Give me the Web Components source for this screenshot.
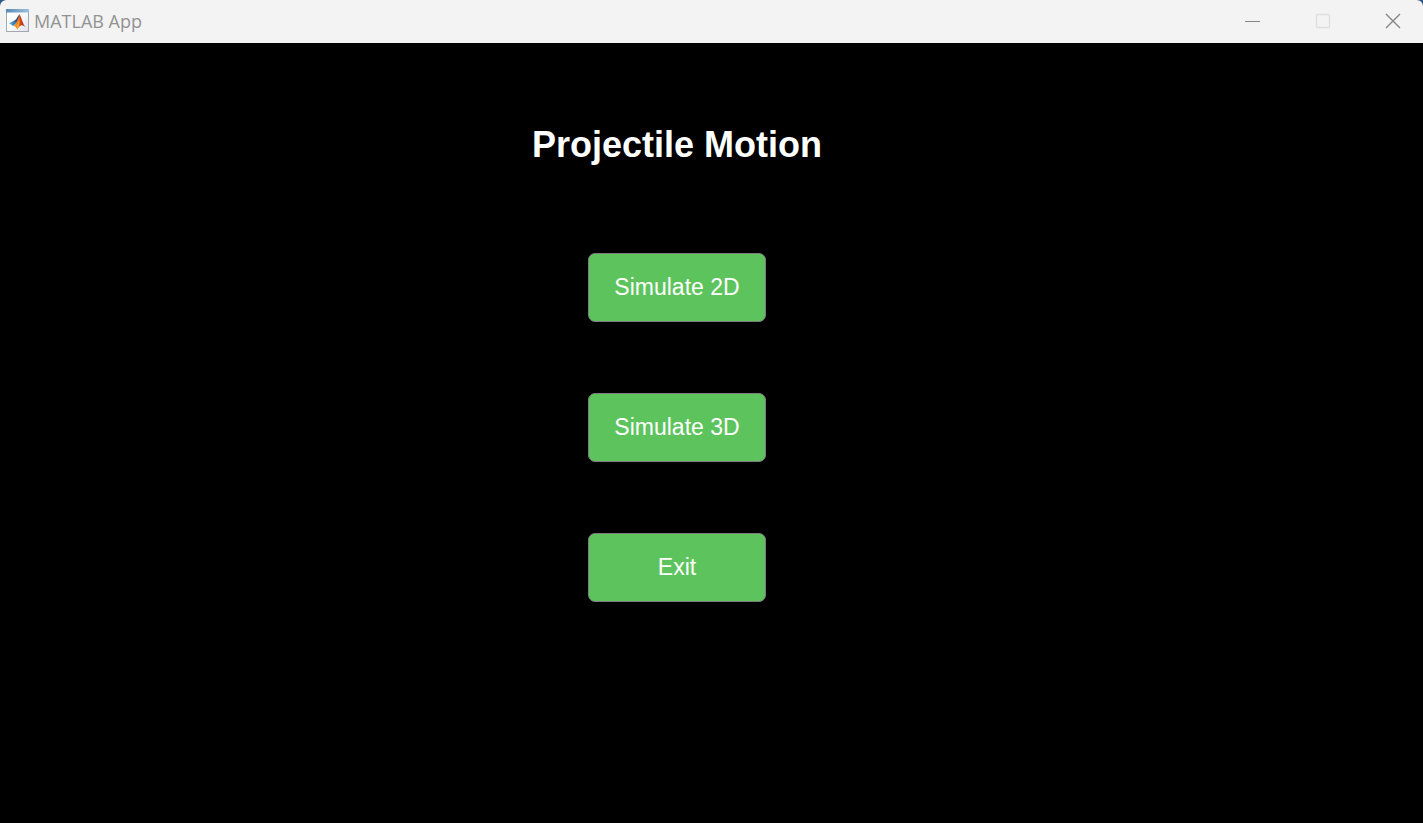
<!DOCTYPE html>
<html lang="en">
<head>
<meta charset="utf-8">
<title>MATLAB App</title>
<style>
  html, body { margin: 0; height: 100%; background: #26588c; }
</style>
</head>
<body>
<app-window>
  <title-bar slot="bar">MATLAB App</title-bar>
  <launch-panel>
    <span slot="heading">Projectile Motion</span>
    <push-button>Simulate 2D</push-button>
    <push-button>Simulate 3D</push-button>
    <push-button>Exit</push-button>
  </launch-panel>
</app-window>
<script>
function define(name, html) {
  const template = document.createElement('template');
  template.innerHTML = html;
  customElements.define(name, class extends HTMLElement {
    constructor() {
      super();
      this.attachShadow({ mode: 'open' }).append(template.content.cloneNode(true));
    }
  });
}

define('app-window', `
  <style>
    :host { display: flex; flex-direction: column; min-height: 100vh; background: #000;
      border-radius: 6px 6px 0 0; overflow: hidden; font-family: "Liberation Sans", Arial, sans-serif; }
    main { flex: 1; }
  </style>
  <slot name="bar"></slot>
  <main><slot></slot></main>`);

define('title-bar', `
  <style>
    :host { display: flex; align-items: center; height: 43px; box-sizing: border-box; padding: 0 0 2px 6px;
      background: #f3f3f3; color: #929292; font: 18px/24px "Open Sans", "Noto Sans", sans-serif; }
    .logo { width: 24px; height: 24px; margin-right: 4px; flex: none; }
    .name { flex: 1; }
    .controls { display: flex; }
    button { width: 70px; height: 40px; box-sizing: border-box; padding: 0; border: 0; background: none; color: #858585;
      display: grid; place-items: center; }
    button:disabled { color: #dedede; }
    button:last-child { width: 65px; padding-left: 5px; }
    button svg { width: 16px; height: 16px; display: block; }
  </style>
  <svg class="logo" viewBox="0 0 24 24" aria-hidden="true">
    <defs>
      <linearGradient id="head" x1="0" y1="0" x2="1" y2="0"><stop stop-color="#5789b3"/><stop offset="1" stop-color="#9ec1dc"/></linearGradient>
      <linearGradient id="sheet" x1="0" y1="0" x2="1" y2="1"><stop offset=".4" stop-color="#fff"/><stop offset="1" stop-color="#dce2e9"/></linearGradient>
      <linearGradient id="flame" x1="0" y1="0" x2="1" y2="0"><stop stop-color="#f5a126"/><stop offset=".35" stop-color="#f07a1c"/><stop offset=".6" stop-color="#d1431a"/><stop offset="1" stop-color="#8c2b16"/></linearGradient>
      <linearGradient id="wing" x1="0" y1="0" x2="1" y2="0"><stop stop-color="#65b8dc"/><stop offset="1" stop-color="#2865a0"/></linearGradient>
    </defs>
    <rect x=".5" y=".5" width="22" height="22" fill="url(#sheet)" stroke="#a3a9af"/>
    <path d="M0 0h23v3.5H0z" fill="url(#head)"/>
    <path d="M3 14.3L7.5 12 10 14.2 7.2 17z" fill="url(#wing)"/>
    <path d="M7.5 12L10 10.6Q11.5 7.5 13.6 5L12.2 12 10 14.2z" fill="#2b588b"/>
    <path d="M7.2 17Q9 16.3 10 14.2Q12.2 11 13.6 5Q15.2 8 16.6 12.8Q17.5 16 19.5 18Q17 15.8 15.2 16.3Q13 17.2 11.3 20.4Q10 17 7.2 17z" fill="url(#flame)"/>
    <path d="M10.6 17Q12.2 13 13.5 10Q14 14 12.8 17.2L11.3 20z" fill="#f3a52d"/>
  </svg>
  <span class="name"><slot></slot></span>
  <div class="controls">
    <button type="button" aria-label="Minimize"><svg viewBox="0 0 16 16"><path d="M0 8.5h15" stroke="currentColor"/></svg></button>
    <button type="button" aria-label="Maximize" disabled><svg viewBox="0 0 16 16"><rect x="1.5" y="1.5" width="13" height="13" rx="1" fill="none" stroke="currentColor" stroke-width="1.3"/></svg></button>
    <button type="button" aria-label="Close"><svg viewBox="0 0 16 16"><path d="M1 1l14 14M15 1L1 15" stroke="currentColor" stroke-width="1.4"/></svg></button>
  </div>`);

define('launch-panel', `
  <style>
    :host { display: flex; flex-direction: column; align-items: center; padding: 80px 69px 80px 0; }
    h1 { margin: 0 0 86px; font-size: 36px; line-height: 44px; color: #fff; }
    .actions { display: grid; gap: 71px; }
  </style>
  <h1><slot name="heading"></slot></h1>
  <div class="actions"><slot></slot></div>`);

define('push-button', `
  <style>
    :host { display: block; }
    button { display: block; width: 178px; height: 69px; padding: 0 0 2px; border: 1px solid #7d7d7d; border-radius: 7px;
      background: #5dc45d; color: #fff; font: 23px/28px "Liberation Sans", Arial, sans-serif; }
  </style>
  <button type="button"><slot></slot></button>`);
</script>
</body>
</html>
